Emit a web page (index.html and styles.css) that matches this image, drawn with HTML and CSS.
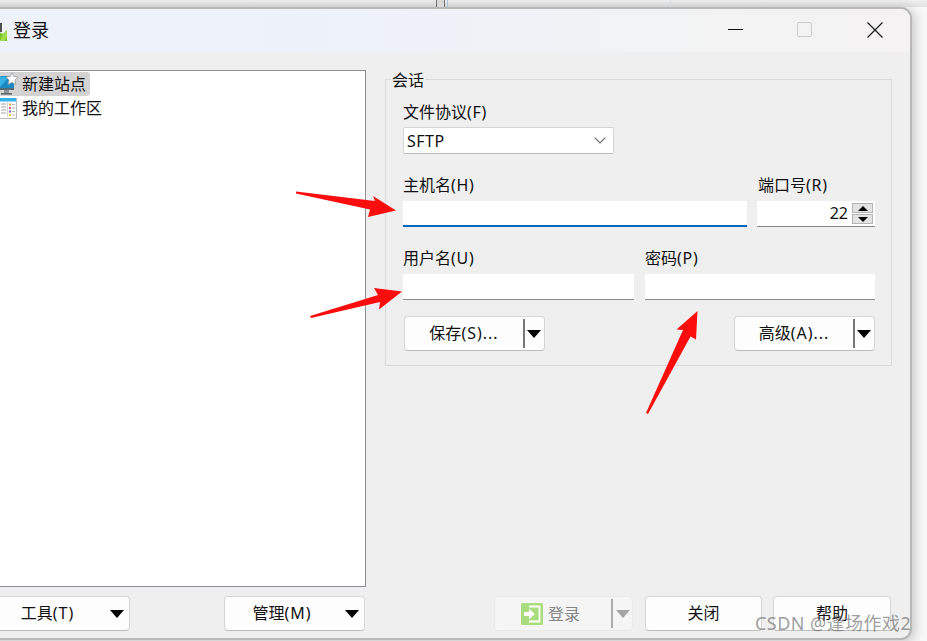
FILE: index.html
```html
<!DOCTYPE html>
<html lang="zh-CN">
<head>
<meta charset="utf-8">
<title>登录</title>
<link rel="stylesheet" href="styles.css">
</head>
<body>
<div class="backdrop">
  <span class="bd-gap-a"></span>
  <span class="bd-dark"></span>
  <span class="bd-blue"></span>
  <span class="bd-gap-b"></span>
  <span class="bd-light"></span>
</div>
<div class="window">
  <header class="titlebar">
    <div class="title">
      <svg class="title-icon" viewBox="0 0 20 20" width="20" height="20">
        <path d="M11 2l4 0v9h-4z" fill="#4f4f4f"/>
        <path d="M8 9l8 4 4-4v11H8z" fill="#76c423"/>
        <path d="M13 20l3-7 4-4v6l-2 5z" fill="#9fdd4f"/>
      </svg>
      <span>登录</span>
    </div>
    <div class="controls">
      <span class="ctl"><span class="ctl-min"></span></span>
      <span class="ctl"><span class="ctl-max"></span></span>
      <span class="ctl">
        <svg viewBox="0 0 16 16" width="16" height="16"><path d="M.5.5l15 15M15.5.5l-15 15" stroke="#1a1a1a" stroke-width="1.2" fill="none"/></svg>
      </span>
    </div>
  </header>
  <main class="body-grid">
    <section class="tree">
      <div class="tree-row tree-row-selected">
        <svg class="tree-icon" viewBox="0 0 24 24" width="24" height="24">
          <rect x="8" y="4" width="14" height="14" rx="1" fill="#1d8ac6"/>
          <path d="M8 5h9l-9 10z" fill="#39b3e6"/>
          <rect x="8" y="16" width="14" height="2" fill="#5a6a72"/>
          <rect x="12" y="18" width="5" height="3" fill="#8c9499"/>
          <rect x="9" y="21" width="11" height="1.6" fill="#5f6468"/>
          <path d="M20 .5l1.800 4 4.200.6-3 3 .8 4.400-3.800-2.200-3.800 2.200.8-4.400-3-3 4.200-.6z" fill="#fff" stroke="#9a9a9a" stroke-width=".8"/>
        </svg>
        <span>新建站点</span>
      </div>
      <div class="tree-row">
        <svg class="tree-icon" viewBox="0 0 24 24" width="24" height="24">
          <rect x="7.5" y="2.5" width="17" height="20" fill="#fff" stroke="#b9bdc0"/>
          <rect x="8" y="2" width="16" height="3.5" fill="#35b2e8"/>
          <path d="M9 8h5M9 11h5M9 14h5M9 17h5" stroke="#c4c4c4" stroke-width="1.4"/>
          <path d="M15.5 6v15" stroke="#d2d2d2"/>
          <rect x="17" y="7.5" width="2" height="2" fill="#e6a42a"/>
          <rect x="17" y="11" width="2" height="2" fill="#e05a7a"/>
          <rect x="17" y="14.5" width="2" height="2" fill="#7a62c8"/>
          <rect x="17" y="18" width="2" height="2" fill="#e6c42a"/>
          <path d="M20 8.500h3M20 12h3M20 15.500h3M20 19h3" stroke="#b8b8b8"/>
        </svg>
        <span>我的工作区</span>
      </div>
    </section>
    <section class="group">
      <div class="legend"><span>会话</span></div>
      <div class="field field-protocol">
        <label class="lbl">文件协议<span class="lat">(F)</span></label>
        <div class="select">
          <span class="select-value">SFTP</span>
          <svg viewBox="0 0 12 7" width="12" height="7"><path d="M.7.7L6 6l5.300-5.300" fill="none" stroke="#666" stroke-width="1.1"/></svg>
        </div>
      </div>
      <div class="row-host">
        <div class="field field-wide">
          <label class="lbl">主机名<span class="lat">(H)</span></label>
          <div class="input input-focus"></div>
        </div>
        <div class="field field-wide">
          <label class="lbl lbl-port">端口号<span class="lat">(R)</span></label>
          <div class="input input-port">
            <span class="port-value">22</span>
            <span class="spin">
              <span class="spin-btn"><i class="tri-up"></i></span>
              <span class="spin-btn"><i class="tri-down"></i></span>
            </span>
          </div>
        </div>
      </div>
      <div class="row-user">
        <div class="field field-wide">
          <label class="lbl">用户名<span class="lat">(U)</span></label>
          <div class="input"></div>
        </div>
        <div class="field field-wide">
          <label class="lbl">密码<span class="lat">(P)</span></label>
          <div class="input"></div>
        </div>
      </div>
      <div class="row-actions">
        <div class="btn btn-split">
          <span class="btn-label">保存<span class="lat-btn">(S)...</span></span>
          <span class="btn-sep"></span>
          <span class="btn-drop-split"><i class="caret"></i></span>
        </div>
        <div class="btn btn-split">
          <span class="btn-label">高级<span class="lat-btn">(A)...</span></span>
          <span class="btn-sep"></span>
          <span class="btn-drop-split"><i class="caret"></i></span>
        </div>
      </div>
    </section>
    <div class="foot-left">
      <div class="btn btn-tools">
        <span class="btn-label">工具<span class="lat-btn">(T)</span></span>
        <span class="btn-drop"><i class="caret"></i></span>
      </div>
      <div class="btn btn-manage">
        <span class="btn-label">管理<span class="lat-btn">(M)</span></span>
        <span class="btn-drop"><i class="caret"></i></span>
      </div>
    </div>
    <div class="foot-right">
      <div class="btn btn-login">
        <span class="btn-label login-label">
          <svg viewBox="0 0 22 22" width="22" height="22">
            <rect width="22" height="22" rx="1.500" fill="#a9dc7f"/>
            <path d="M8 3.500h10.500v15H8" fill="none" stroke="#fff" stroke-width="1.800"/>
            <path d="M3 9h5V5.800L14 11l-6 5.200V13H3z" fill="#fff"/>
          </svg>
          <span>登录</span>
        </span>
        <span class="btn-sep btn-sep-light"></span>
        <span class="btn-drop-login"><i class="caret caret-gray"></i></span>
      </div>
      <div class="btn btn-close"><span class="btn-label">关闭</span></div>
      <div class="btn btn-help"><span class="btn-label">帮助</span></div>
    </div>
  </main>
</div>
<svg class="arrows" viewBox="0 0 927 641" width="927" height="641">
  <polygon points="296,191.500 375,201 373,196 396,210.500 368,217 370,209.500 296,193.500" fill="#fb0d0d"/>
  <polygon points="310,316 378,295 374,288 402,291.500 379,309.500 380,302 311,318" fill="#fb0d0d"/>
  <polygon points="646,413 683,330 676.500,329.500 697.500,311 696,339.500 690.500,336.500 648,414" fill="#fb0d0d"/>
</svg>
<div class="watermark">CSDN @逢场作戏2</div>
</body>
</html>
```
FILE: styles.css
```css
* { box-sizing: border-box; }
html, body { margin: 0; padding: 0; }
body {
  width: 927px;
  height: 641px;
  overflow: hidden;
  position: relative;
  background: #f7f7f7;
  font-family: "Noto Sans", "Noto Sans CJK SC", sans-serif;
  font-size: 16px;
  line-height: 20px;
  color: #111;
}
.backdrop {
  display: flex;
  height: 7px;
  background: linear-gradient(#efefef, #e2e2e2);
}
.bd-gap-a { width: 436px; }
.bd-dark { width: 9px; background: #d9d9d9; border-left: 1px solid #6f6f6f; border-right: 1px solid #6f6f6f; }
.bd-blue { width: 3px; margin-left: 2px; border-left: 1px solid #a9c3dd; }
.bd-gap-b { width: 220px; }
.bd-light { width: 1px; background: #d3dee9; }
.window {
  margin-left: -20px;
  width: 932px;
  height: 633px;
  border: 2px solid #b8b8b8;
  border-radius: 11px;
  background: #efefef;
  overflow: hidden;
  box-shadow: 2px 2px 12px rgba(0, 0, 0, .22);
}
.titlebar {
  display: flex;
  align-items: center;
  justify-content: space-between;
  height: 43px;
  padding-bottom: 2px;
  background: linear-gradient(90deg, #edf2fb 0, #edf2fb 28%, #eff2f6 60%, #f3f3f3 80%, #f4f2f2 100%);
}
.title { display: flex; align-items: center; padding-left: 5px; font-size: 18px; }
.title-icon { margin-top: 2px; margin-right: 6px; }
.controls { display: flex; }
.ctl { display: flex; align-items: center; justify-content: center; width: 70px; height: 41px; }
.ctl-min { width: 15px; height: 1px; background: #111; }
.ctl-max { width: 15px; height: 15px; margin-right: 2px; border: 1.500px solid #ccc; border-radius: 2px; }

.body-grid {
  display: grid;
  grid-template-columns: 376px 507px;
  grid-template-rows: 517px 35px;
  column-gap: 19px;
  row-gap: 9px;
  padding: 18px 0 0 8px;
}
.tree {
  background: #fff;
  border: 1px solid #8d8f94;
  padding-top: 1px;
}
.tree-row {
  display: flex;
  align-items: center;
  width: max-content;
  height: 24px;
  padding-right: 4px;
  border-radius: 3px;
}
.tree-row-selected { background: #d3d3d3; }
.tree-icon { margin-right: 6px; margin-left: 1px; overflow: visible; }

.group {
  margin-top: 9px;
  height: 287px;
  border: 1px solid #dadada;
  padding: 0 16px 0 17px;
}
.legend { margin: -10px 0 12px -12px; height: 20px; }
.legend span { display: inline-block; background: #efefef; padding: 0 1px 0 1px; }
.field { display: flex; flex-direction: column; gap: 5px; }
.field-wide { gap: 6px; }
.lbl { display: block; }
.lat { letter-spacing: .7px; }
.lat-btn { letter-spacing: 1px; }
.lbl-port { padding-left: 1px; }
.select {
  display: flex;
  align-items: center;
  justify-content: space-between;
  width: 211px;
  height: 27px;
  padding: 0 7px 0 3px;
  background: #fff;
  border: 1px solid #d5d5d5;
  border-bottom-color: #bcbcbc;
  border-radius: 2px;
}
.select-value { letter-spacing: .5px; }
.input { height: 26px; background: #fff; border-bottom: 1px solid #8a8a8a; }
.input-focus { border-bottom: 2px solid #0067c0; }
.input-port { display: flex; align-items: center; justify-content: flex-end; padding: 0 2px 0 0; }
.port-value { margin-right: 4px; padding-bottom: 2px; }
.spin { display: flex; flex-direction: column; gap: 1px; }
.spin-btn {
  display: flex;
  align-items: center;
  justify-content: center;
  width: 21px;
  height: 10px;
  background: #e3e3e3;
  border: 1px solid #b4b4b4;
}
.tri-up { width: 0; height: 0; border: 5px solid transparent; border-top: 0; border-bottom: 5px solid #000; }
.tri-down { width: 0; height: 0; border: 5px solid transparent; border-bottom: 0; border-top: 5px solid #000; }
.row-host { display: grid; grid-template-columns: 344px 118px; column-gap: 10px; margin-top: 21px; }
.row-user { display: grid; grid-template-columns: 231px 230px; column-gap: 11px; margin-top: 21px; }
.row-actions { display: flex; justify-content: space-between; margin: 16px 0 0 1px; }

.btn {
  display: flex;
  align-items: center;
  height: 35px;
  background: #fdfdfd;
  border: 1px solid #d6d6d6;
  border-bottom-color: #bdbdbd;
  border-radius: 4px;
}
.btn-label { flex: 1; padding-bottom: 2px; text-align: center; }
.btn-split { width: 141px; }
.btn-sep { width: 2px; height: 29px; background: #777; }
.btn-sep-light { background: #ababab; }
.btn-drop { display: flex; justify-content: center; width: 25px; }
.btn-drop-split { display: flex; justify-content: center; width: 17px; margin-right: 2px; }
.btn-drop-login { display: flex; justify-content: center; width: 19px; }
.caret { width: 0; height: 0; border-left: 7.500px solid transparent; border-right: 7.500px solid transparent; border-top: 8px solid #000; }
.caret-gray { border-top-color: #a5a5a5; }

.foot-left { display: flex; justify-content: space-between; padding-right: 1px; }
.btn-tools { width: 140px; }
.btn-manage { width: 141px; }
.foot-right { display: flex; justify-content: flex-end; padding-right: 1px; }
.btn-login {
  width: 139px;
  margin-right: 12px;
  background: #f5f5f5;
  border-color: #e9e9e9;
  color: #858585;
}
.login-label { display: flex; align-items: center; justify-content: center; gap: 5px; padding-right: 5px; padding-bottom: 0; }
.btn-close { width: 117px; margin-right: 11px; }
.btn-help { width: 118px; }

.arrows { position: absolute; left: 0; top: 0; pointer-events: none; }
.watermark {
  position: absolute;
  left: 755px;
  top: 611px;
  font-size: 18px;
  line-height: 24px;
  letter-spacing: .45px;
  white-space: nowrap;
  color: rgba(95, 95, 95, .62);
}
```
